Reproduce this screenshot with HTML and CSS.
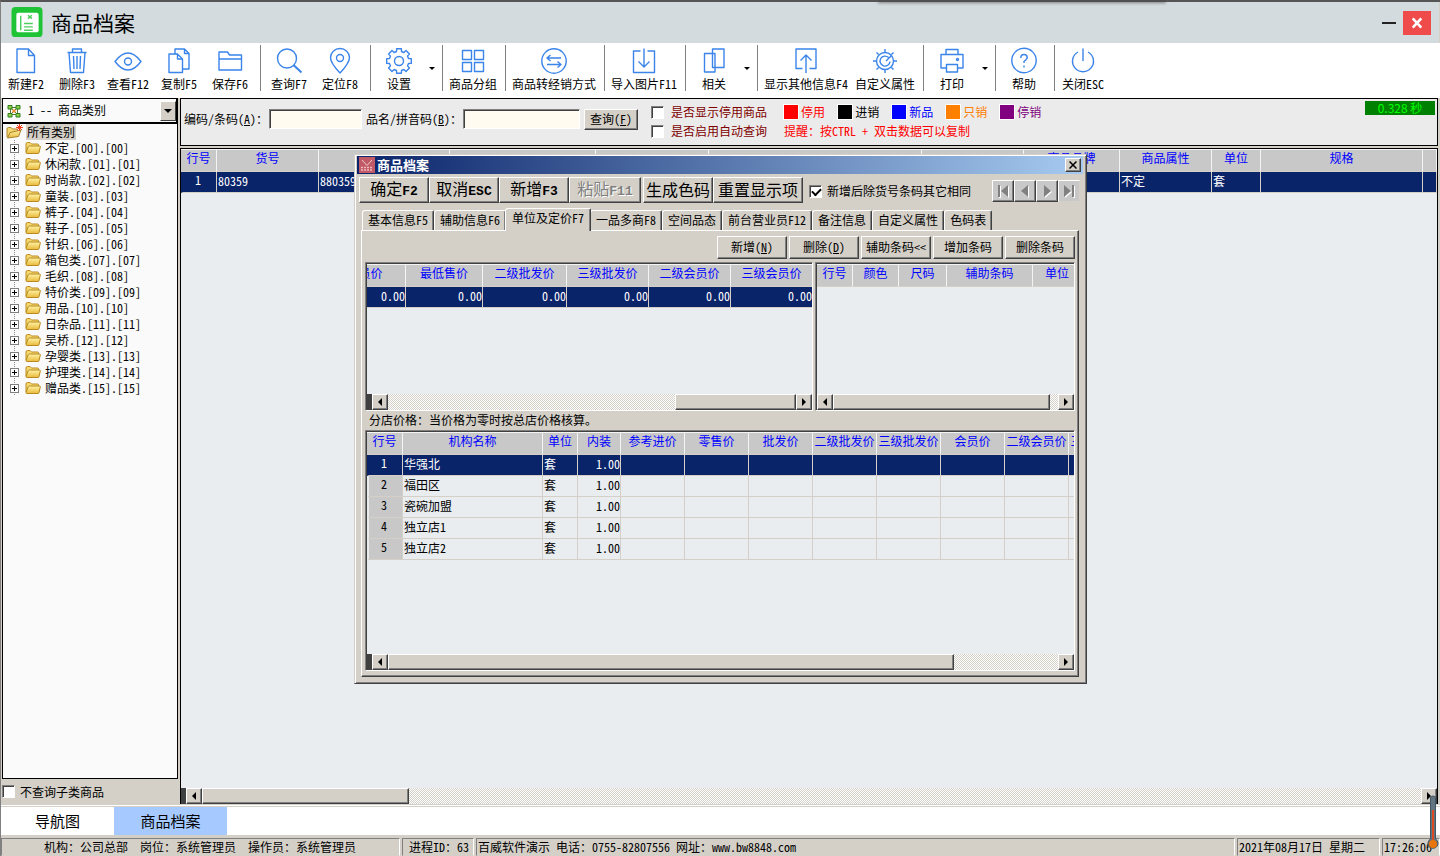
FILE: index.html
```html
<!DOCTYPE html>
<html lang="zh-CN">
<head>
<meta charset="utf-8">
<title>商品档案</title>
<link rel="stylesheet" href="styles.css">
</head>
<body>
<svg class="defs" aria-hidden="true">
  <defs>
    <linearGradient id="gold" x1="0" y1="0" x2="0" y2="1"><stop offset="0" stop-color="#fff3a6"/><stop offset="1" stop-color="#e9b93c"/></linearGradient>
    <symbol id="folder" viewBox="0 0 16 14">
      <path d="M1 11V3Q1 1.500 2.500 1.500H5L6.500 3H12.500Q13.500 3 13.500 4V5" fill="#f6d873" stroke="#b98a1c"/>
      <path d="M1 11.500 3.300 5.500Q3.600 5 4.200 5H14.500Q15.500 5 15.300 6L14 11.700Q13.800 12.500 13 12.500H2Q1 12.500 1 11.500Z" fill="url(#gold)" stroke="#b98a1c"/>
    </symbol>
  </defs>
</svg>

<div class="window">
  <header class="titlebar">
    <svg class="logo" viewBox="0 0 32 32"><rect width="32" height="31" rx="4" fill="#1fc436"/><path d="M5 8Q5 6 7 6H26Q28 6 28 8V24Q28 26 26 26H7Q5 26 5 24Z" fill="#fff"/><path d="M9.500 9V24M13 17H22M13 20.500H22M13 24H22M17 8.500 21 12M21 8.500 17 12" stroke="#4ccf5c" stroke-width="1.500" fill="none"/></svg>
    <h1>商品档案</h1>
    <div class="notch"></div>
    <button class="min" type="button" aria-label="最小化"></button>
    <button class="close" type="button" aria-label="关闭"><svg viewBox="0 0 14 14"><path d="M2 1.500 12 12.500M12 1.500 2 12.500" stroke="#fff" stroke-width="3"/></svg></button>
  </header>

  <nav class="toolbar">
    <button type="button"><svg viewBox="0 0 28 28"><path d="M5 2H16.500L22.500 8.500V25.500H5ZM16.500 2V8.500H22.500"/></svg>新建F2</button>
    <button type="button"><svg viewBox="0 0 28 28"><path d="M4.500 5.500H23.500M9.500 5V2H18.500V5M6 5.500 7.500 25.500H20.500L22 5.500M10.500 9 11 22M14 9V22M17.500 9 17 22"/></svg>删除F3</button>
    <button type="button"><svg viewBox="0 0 28 28"><path d="M1 14.500Q14-2.500 27 14.500Q14 31.500 1 14.500Z"/><circle cx="14" cy="14.500" r="3.500"/></svg>查看F12</button>
    <button type="button"><svg viewBox="0 0 28 28"><path d="M10 6.500V2H19.500L24 6.500V22H17.500M19.500 2V6.500H24M4 7H12.500L17.500 12V25.500H4ZM12.500 7V12H17.500"/></svg>复制F5</button>
    <button type="button"><svg viewBox="0 0 28 28"><path d="M3 23V5H11.500L13.500 8H25.500V23ZM3 12H25.500"/></svg>保存F6</button>
    <i class="sep"></i>
    <button type="button"><svg viewBox="0 0 28 28"><circle cx="12" cy="11.500" r="9.500"/><path d="M18.500 18 26.500 25.500" stroke-width="2"/></svg>查询F7</button>
    <button type="button"><svg viewBox="0 0 28 28"><path d="M14 26Q4.500 16 4.500 10.500A9.500 9 0 0 1 23.500 10.500Q23.500 16 14 26Z"/><circle cx="14" cy="11" r="3.500"/></svg>定位F8</button>
    <i class="sep"></i>
    <button type="button"><svg viewBox="-14 -14 28 28"><path d="M9.500-2.500 12.300-2.400V2.400L9.500 2.500 8.500 4.900 10.400 7 7 10.400 4.900 8.500 2.500 9.500 2.400 12.300H-2.400L-2.500 9.500-4.900 8.500-7 10.400-10.400 7-8.500 4.900-9.500 2.500-12.300 2.400V-2.400L-9.500-2.500-8.500-4.900-10.400-7-7-10.400-4.900-8.500-2.500-9.500-2.400-12.300H2.400L2.500-9.500 4.900-8.500 7-10.400 10.400-7 8.500-4.900Z"/><circle r="4.500"/></svg>设置</button>
    <button class="more" type="button" aria-label="设置菜单"></button>
    <i class="sep"></i>
    <button type="button"><svg viewBox="0 0 28 28"><path d="M3.500 3.500H12.500V12.500H3.500ZM15.500 3.500H24.500V12.500H15.500ZM3.500 15.500H12.500V24.500H3.500ZM15.500 15.500H24.500V24.500H15.500Z"/></svg>商品分组</button>
    <i class="sep"></i>
    <button type="button"><svg viewBox="0 0 28 28"><circle cx="14" cy="14" r="12.200"/><path d="M21 11H7.500M10.500 8 7 11 10.500 14M7 17.500H20.500M17.500 14.500 21 17.500 17.500 20.500"/></svg>商品转经销方式</button>
    <i class="sep"></i>
    <button type="button"><svg viewBox="0 0 28 28"><path d="M10.500 4H3.500V25.500H24.500V4H17.500M14 1.500V20M8.500 14.500 14 20 19.500 14.500"/></svg>导入图片F11</button>
    <i class="sep"></i>
    <button type="button"><svg viewBox="0 0 28 28"><path d="M4.500 6.500H15V25H4.500ZM12.500 2H24V20.500H12.500Z"/></svg>相关</button>
    <button class="more" type="button" aria-label="相关菜单"></button>
    <i class="sep"></i>
    <button type="button"><svg viewBox="0 0 28 28"><path d="M10.500 21.500H4V2H24V21.500H17.500M14 26V8M8.500 13.500 14 8 19.500 13.500"/></svg>显示其他信息F4</button>
    <button type="button"><svg viewBox="-14 -14 28 28"><circle r="8.500"/><path d="M3.500-3.500A5 5 0 1 0 5 .500M1 0 6.500-5.500M0-9V-12M0 9V12M-9 0H-12M9 0H12M6.400-6.400 8.500-8.500M-6.400-6.400-8.500-8.500M6.400 6.400 8.500 8.500M-6.400 6.400-8.500 8.500"/></svg>自定义属性</button>
    <i class="sep"></i>
    <button type="button"><svg viewBox="0 0 28 28"><path d="M8 7.500V2.500H20V7.500M8 21H3V7.500H25V21H20M8.500 17.500H19.500V25H8.500Z"/><circle cx="19.500" cy="12.500" r="1"/></svg>打印</button>
    <button class="more" type="button" aria-label="打印菜单"></button>
    <i class="sep"></i>
    <button type="button"><svg viewBox="0 0 28 28"><circle cx="14" cy="13.500" r="12.200"/><path d="M10.800 11Q10.800 7.500 14 7.500T17.200 10.500Q17.200 12 14 14.500V16M14 18.500V20.500"/></svg>帮助</button>
    <i class="sep"></i>
    <button type="button"><svg viewBox="0 0 28 28"><path d="M14 1.500V14M9 5A10.500 10.500 0 1 0 19 5"/></svg>关闭ESC</button>
  </nav>

  <main class="work">
    <aside class="side">
      <div class="combo">
        <svg viewBox="0 0 14 14"><path d="M5 3.500H9M5 10.500H9M3.500 5V9M10.500 5V9M4 4 10 10M10 4 4 10" stroke="#557a33"/><path d="M1 1.500H5V5H1ZM9 1.500H13V5H9ZM1 9.500H5V13H1ZM9 9.500H13V13H9Z" fill="#8ed04c" stroke="#2f7d1c"/><rect x="5.500" y="5.500" width="3" height="3" fill="#f08a24"/></svg>
        <select aria-label="类别方式"><option>1 -- 商品类别</option></select>
        <i class="drop"></i>
      </div>
      <div class="tree">
        <div class="root"><svg viewBox="0 0 18 16"><path d="M1 13V5Q1 3.500 2.500 3.500H5L6.500 5H11.500V7" fill="#f6d873" stroke="#a9822a"/><path d="M1.500 14 4 8.500 15 6 12.500 12.500Z" fill="url(#gold)" stroke="#a9822a"/><path d="M13.500 0V7M10 3.500H17M11 1 16 6M16 1 11 6" stroke="#f04020"/></svg><span>所有类别</span></div>
        <ul>
          <li><i></i><svg><use href="#folder"/></svg>不定.[00].[00]</li>
          <li><i></i><svg><use href="#folder"/></svg>休闲款.[01].[01]</li>
          <li><i></i><svg><use href="#folder"/></svg>时尚款.[02].[02]</li>
          <li><i></i><svg><use href="#folder"/></svg>童装.[03].[03]</li>
          <li><i></i><svg><use href="#folder"/></svg>裤子.[04].[04]</li>
          <li><i></i><svg><use href="#folder"/></svg>鞋子.[05].[05]</li>
          <li><i></i><svg><use href="#folder"/></svg>针织.[06].[06]</li>
          <li><i></i><svg><use href="#folder"/></svg>箱包类.[07].[07]</li>
          <li><i></i><svg><use href="#folder"/></svg>毛织.[08].[08]</li>
          <li><i></i><svg><use href="#folder"/></svg>特价类.[09].[09]</li>
          <li><i></i><svg><use href="#folder"/></svg>用品.[10].[10]</li>
          <li><i></i><svg><use href="#folder"/></svg>日杂品.[11].[11]</li>
          <li><i></i><svg><use href="#folder"/></svg>吴桥.[12].[12]</li>
          <li><i></i><svg><use href="#folder"/></svg>孕婴类.[13].[13]</li>
          <li><i></i><svg><use href="#folder"/></svg>护理类.[14].[14]</li>
          <li><i></i><svg><use href="#folder"/></svg>赠品类.[15].[15]</li>
        </ul>
      </div>
      <label class="check subcheck"><input type="checkbox">不查询子类商品</label>
    </aside>

    <section class="content">
      <form class="filter">
        <label for="code">编码/条码(<u>A</u>)：</label>
        <input id="code" class="code" type="text">
        <label for="name">品名/拼音码(<u>B</u>)：</label>
        <input id="name" class="name" type="text">
        <button class="btn query" type="button">查询(<u>F</u>)</button>
        <div class="checks">
          <label class="check"><input type="checkbox">是否显示停用商品</label>
          <label class="check"><input type="checkbox">是否启用自动查询</label>
        </div>
        <div class="notes">
          <ul class="legend">
            <li class="red"><i></i>停用</li><li class="black"><i></i>进销</li><li class="blue"><i></i>新品</li><li class="orange"><i></i>只销</li><li class="purple"><i></i>停销</li>
          </ul>
          <p>提醒：按CTRL + 双击数据可以复制</p>
        </div>
        <output class="timer">0.328 秒</output>
      </form>

      <div class="grid main-grid">
        <div class="pane">
          <table>
            <colgroup><col class="c36"><col class="c102"><col class="c131"><col class="c146"><col class="c113"><col class="c213"><col class="c102"><col class="c96"><col class="c92"><col class="c49"><col class="c162"><col></colgroup>
            <thead><tr><th>行号</th><th>货号</th><th></th><th></th><th></th><th></th><th></th><th>商品品牌</th><th>商品属性</th><th>单位</th><th>规格</th><th></th></tr></thead>
            <tbody><tr class="on"><td class="no">1</td><td>80359</td><td>880359</td><td></td><td></td><td></td><td></td><td></td><td>不定</td><td>套</td><td></td><td></td></tr></tbody>
          </table>
        </div>
        <div class="scroll"><i class="dark"></i><button class="left" type="button" aria-label="向左"></button><i class="thumb t207"></i><i class="fill"></i><button class="right" type="button" aria-label="向右"></button></div>
      </div>
    </section>
  </main>

  <nav class="pages"><a href="#">导航图</a><a href="#" class="on">商品档案</a></nav>

  <footer class="status">
    <span class="org">机构：公司总部  岗位：系统管理员  操作员：系统管理员</span>
    <span class="pid">进程ID：63</span>
    <span class="firm">百威软件演示 电话：0755-82807556 网址：www.bw8848.com</span>
    <span class="date">2021年08月17日 星期二</span>
    <span class="time">17:26:06</span>
    <svg class="thermo" viewBox="0 0 14 56"><path d="M4.500 3Q4.500 1 7 1T9.500 3V44A5 5 0 1 1 4.500 44Z" fill="#62747f" stroke="#405565"/><path d="M7 15V48" stroke="#dd4a22" stroke-width="2"/><circle cx="7" cy="49" r="4" fill="#e8760c"/></svg>
  </footer>
</div>

<div class="dialog" role="dialog" aria-labelledby="dlg-title">
  <div class="dlg-title">
    <svg viewBox="0 0 16 16"><rect width="16" height="16" fill="#c05a66"/><path d="M3 3 8 8.500 13 3" fill="none" stroke="#f3c9c9"/><path d="M2 10.500H14M2 13H14" stroke="#efb9bd" stroke-width="1.500" stroke-dasharray="2 1"/></svg>
    <h2 id="dlg-title">商品档案</h2>
    <button class="btn" type="button" aria-label="关闭"><svg viewBox="0 0 8 8"><path d="M.500.500 7.500 7.500M7.500.500.500 7.500" stroke="#000" stroke-width="1.500"/></svg></button>
  </div>
  <div class="dlg-tools">
    <button class="btn w70" type="button">确定<b>F2</b></button><button class="btn w70" type="button">取消<b>ESC</b></button><button class="btn w70" type="button">新增<b>F3</b></button><button class="btn w72" type="button" disabled>粘贴<b>F11</b></button><button class="btn gap w70" type="button">生成色码</button><button class="btn w90" type="button">重置显示项</button>
    <label class="check"><input type="checkbox" checked>新增后除货号条码其它相同</label>
    <div class="pager">
      <button class="btn" type="button" disabled aria-label="首条"><svg viewBox="0 0 18 18"><path d="M4 3H6V15H4ZM14 3V15L7 9Z"/></svg></button>
      <button class="btn" type="button" disabled aria-label="上一条"><svg viewBox="0 0 18 18"><path d="M12 3V15L5 9Z"/></svg></button>
      <button class="btn" type="button" disabled aria-label="下一条"><svg viewBox="0 0 18 18"><path d="M6 3V15L13 9Z"/></svg></button>
      <button class="btn" type="button" disabled aria-label="末条"><svg viewBox="0 0 18 18"><path d="M4 3V15L11 9ZM12 3H14V15H12Z"/></svg></button>
    </div>
  </div>
  <div class="tabs">
    <button type="button">基本信息F5</button><button type="button">辅助信息F6</button><button type="button" class="on">单位及定价F7</button><button type="button">一品多商F8</button><button type="button">空间品态</button><button type="button">前台营业员F12</button><button type="button">备注信息</button><button type="button">自定义属性</button><button type="button">色码表</button>
  </div>
  <div class="panel">
    <div class="actions">
      <button class="btn" type="button">新增(<u>N</u>)</button><button class="btn" type="button">删除(<u>D</u>)</button><button class="btn" type="button">辅助条码&lt;&lt;</button><button class="btn" type="button">增加条码</button><button class="btn" type="button">删除条码</button>
    </div>
    <div class="pair">
      <div class="grid sunk prices">
        <div class="pane">
          <table class="scrolled">
            <colgroup><col class="c82"><col class="c77"><col class="c84"><col class="c82"><col class="c82"><col class="c82"></colgroup>
            <thead><tr><th>会员价</th><th>最低售价</th><th>二级批发价</th><th>三级批发价</th><th>二级会员价</th><th>三级会员价</th></tr></thead>
            <tbody><tr class="on num"><td>0.00</td><td>0.00</td><td>0.00</td><td>0.00</td><td>0.00</td><td>0.00</td></tr></tbody>
          </table>
        </div>
        <div class="scroll"><i class="dark"></i><button class="left" type="button" aria-label="向左"></button><i class="fill"></i><i class="thumb t121"></i><button class="right" type="button" aria-label="向右"></button></div>
      </div>
      <div class="grid sunk codes">
        <div class="pane">
          <table>
            <colgroup><col class="c36"><col class="c46"><col class="c48"><col class="c86"><col class="c49"></colgroup>
            <thead><tr><th>行号</th><th>颜色</th><th>尺码</th><th>辅助条码</th><th>单位</th></tr></thead>
          </table>
        </div>
        <div class="scroll"><button class="left" type="button" aria-label="向左"></button><i class="thumb t217"></i><i class="fill"></i><button class="right" type="button" aria-label="向右"></button></div>
      </div>
    </div>
    <p class="hint">分店价格：当价格为零时按总店价格核算。</p>
    <div class="grid sunk shops">
      <div class="pane">
        <table>
          <colgroup><col class="c36"><col class="c140"><col class="c35"><col class="c43"><col class="c64"><col class="c64"><col class="c64"><col class="c64"><col class="c64"><col class="c64"><col class="c64"><col class="c64"></colgroup>
          <thead><tr><th>行号</th><th>机构名称</th><th>单位</th><th>内装</th><th>参考进价</th><th>零售价</th><th>批发价</th><th>二级批发价</th><th>三级批发价</th><th>会员价</th><th>二级会员价</th><th>三级会员价</th></tr></thead>
          <tbody>
            <tr class="on"><td class="no">1</td><td>华强北</td><td>套</td><td class="r">1.00</td><td></td><td></td><td></td><td></td><td></td><td></td><td></td><td></td></tr>
            <tr><td class="no">2</td><td>福田区</td><td>套</td><td class="r">1.00</td><td></td><td></td><td></td><td></td><td></td><td></td><td></td><td></td></tr>
            <tr><td class="no">3</td><td>瓷碗加盟</td><td>套</td><td class="r">1.00</td><td></td><td></td><td></td><td></td><td></td><td></td><td></td><td></td></tr>
            <tr><td class="no">4</td><td>独立店1</td><td>套</td><td class="r">1.00</td><td></td><td></td><td></td><td></td><td></td><td></td><td></td><td></td></tr>
            <tr><td class="no">5</td><td>独立店2</td><td>套</td><td class="r">1.00</td><td></td><td></td><td></td><td></td><td></td><td></td><td></td><td></td></tr>
          </tbody>
        </table>
      </div>
      <div class="scroll"><i class="dark"></i><button class="left" type="button" aria-label="向左"></button><i class="thumb t566"></i><i class="fill"></i><button class="right" type="button" aria-label="向右"></button></div>
    </div>
  </div>
</div>
</body>
</html>
```

FILE: styles.css
```css
:root {
  --face: #d4d0c8;
  --grid: #e9edf0;
  --head: #c8c8c8;
  --navy: #0a246a;
  --dark: #404040;
  --mid: #808080;
}

* { box-sizing: border-box; }

body, button, input, select, output {
  font-family: "Noto Sans CJK SC", "Liberation Sans", sans-serif;
  font-size: 12px;
  line-height: 16px;
  font-feature-settings: "hwid";
  color: #000;
}

body { margin: 0; background: var(--face); white-space: nowrap; overflow: hidden; }
h1, h2, p, ul { margin: 0; padding: 0; font-weight: normal; }
li { list-style: none; }
button { margin: 0; padding: 0; border: 0; background: none; }
svg { display: block; fill: none; flex: none; }
.defs { position: absolute; width: 0; height: 0; }

.window { display: flex; flex-direction: column; min-height: 100vh; border-top: 2px solid #555; border-left: 1px solid var(--mid); }

/* title bar */
.titlebar { display: flex; align-items: center; height: 41px; background: #d4dbdf; padding: 0 8px 0 10px; border-right: 1px solid var(--face); position: relative; }
.logo { width: 32px; height: 31px; }
h1 { font-size: 21px; line-height: 28px; margin: 0 0 2px 8px; flex: 1; }
.notch { position: absolute; top: -2px; left: 61%; width: 20%; height: 2px; background: #505050; box-shadow: 0 1px 3px #707070; }
.min { width: 14px; height: 2px; background: #222; margin-right: 7px; }
.close { width: 28px; height: 24px; background: #f04b4b; display: flex; align-items: center; justify-content: center; }
.close svg { width: 14px; height: 12px; }

/* toolbar */
.toolbar { display: flex; height: 55px; padding-top: 2px; background: #fff; }
.toolbar button { min-width: 51px; padding: 2px 4px 0 3px; display: flex; flex-direction: column; align-items: center; height: 50px; }
.toolbar svg { width: 28px; height: 28px; margin-bottom: 1px; stroke: #3b84ea; stroke-width: 1.4; stroke-linejoin: round; }
.toolbar .sep { width: 1px; height: 46px; margin: 0 3px 0 4px; background: var(--mid); }
.toolbar .more { min-width: 13px; padding: 22px 0 0; }
.more::before { content: ""; border: 3px solid transparent; border-top-color: #000; border-bottom: 0; }

/* work area */
.work { flex: 1; display: flex; min-height: 0; }
.side { width: 178px; display: flex; flex-direction: column; margin-left: 1px; border-right: 1px solid var(--face); }
.combo { display: flex; align-items: center; height: 25px; border: 1px solid #000; border-right-width: 2px; background: #fafafa; margin-right: 1px; padding-left: 4px; }
.combo svg { width: 14px; height: 14px; }
.combo select { appearance: none; flex: 1; border: 0; background: none; padding: 0 0 2px 7px; }
.drop { width: 16px; height: 20px; background: var(--face); border: 1px solid; border-color: #fff var(--dark) var(--dark) #fff; display: flex; align-items: center; justify-content: center; pointer-events: none; }
.drop::before { content: ""; border: 4px solid transparent; border-top-color: #000; border-bottom: 0; }
.tree { flex: 1; border: 1px solid #000; background: #fafafa; margin-right: 1px; }
.root { display: flex; align-items: center; height: 16px; padding-left: 3px; gap: 2px; }
.root svg { width: 18px; height: 16px; }
.root span { background: var(--face); padding: 0 1px; }
.tree li { display: flex; align-items: center; height: 16px; padding-left: 7px; background: repeating-linear-gradient(#888 0 1px, transparent 1px 2px) 11px 0 / 1px 16px no-repeat; }
.tree li i { width: 9px; height: 9px; border: 1px solid var(--mid); background: linear-gradient(#000, #000) center / 5px 1px no-repeat, linear-gradient(#000, #000) center / 1px 5px no-repeat, #fff; }
.tree li i + svg { width: 16px; height: 14px; margin: 0 4px 0 6px; }
.check { display: flex; align-items: center; }
.check input { appearance: none; flex: none; width: 13px; height: 13px; margin: 0; background: #fff; border: 1px solid; border-color: var(--mid) #fff #fff var(--mid); box-shadow: inset 1px 1px var(--dark); }
.check input:checked::before { content: ""; display: block; width: 7px; height: 4px; margin: 2px 0 0 2px; border: 2px solid #000; border-width: 0 0 2px 2px; rotate: -45deg; }
.subcheck { height: 25px; gap: 5px; }

.content { flex: 1; min-width: 0; display: flex; flex-direction: column; gap: 2px; margin-right: 2px; }
.filter { display: flex; align-items: center; height: 48px; background: #ebebeb; border: 1px solid #000; padding: 0 0 6px 3px; }
.filter > input { height: 20px; background: #fffbf0; border: 1px solid; border-color: var(--mid) #fff #fff var(--mid); box-shadow: inset 1px 1px var(--dark); padding: 0 3px; margin-right: 4px; }
.filter > .code { width: 93px; margin-left: 1px; }
.filter > .name { width: 117px; margin: 0 3px 0 1px; }
.btn { background: var(--face); border: 1px solid; border-color: #fff var(--dark) var(--dark) #fff; box-shadow: inset -1px -1px var(--mid); text-align: center; }
.query { width: 54px; height: 21px; margin: 0 13px 0 1px; }
.checks, .notes { display: grid; gap: 3px; margin-top: 5px; }
.checks { color: #800000; }
.checks .check { gap: 7px; }
.notes { margin-left: 17px; color: #f00; }
.legend { display: flex; gap: 13px; }
.legend li { display: flex; align-items: center; gap: 3px; }
.legend i { width: 14px; height: 14px; background: currentColor; outline: 1px solid #fff; }
.legend .black { color: #000; }
.legend .blue { color: #00f; }
.legend .orange { color: #ff8000; }
.legend .purple { color: #800080; }
.timer { margin: 2px 2px 0 auto; align-self: flex-start; width: 70px; height: 14px; line-height: 14px; background: #008000; color: #0f0; text-align: center; font-feature-settings: normal; }

/* grids */
.grid { display: flex; flex-direction: column; background: var(--grid); overflow: hidden; min-width: 0; }
.main-grid { flex: 1; border: 1px solid #000; border-bottom: 0; }
.pane { flex: 1; overflow: hidden; min-height: 0; }
table { border-collapse: separate; border-spacing: 0; table-layout: fixed; width: 100%; }
th { height: 23px; padding: 0 0 5px; background: var(--head); color: #00f; font-weight: normal; border-right: 1px solid #f4f4f4; border-bottom: 1px solid var(--face); border-top: 1px solid #f4f4f4; line-height: 16px; text-align: center; overflow: hidden; }
td { height: 21px; padding: 0 0 2px 1px; border-right: 1px solid var(--face); border-bottom: 1px solid var(--face); line-height: 16px; overflow: hidden; }
.num td, td.r { text-align: right; }
td.no { background: var(--head); text-align: center; padding: 0 3px 4px 0; border-left: 2px solid var(--grid); }
.on td { background: var(--navy); color: #fff; }
.on td.no { background: var(--navy); border-left-color: var(--navy); }
.c35 { width: 35px; } .c36 { width: 36px; } .c43 { width: 43px; } .c46 { width: 46px; } .c48 { width: 48px; } .c49 { width: 49px; }
.c64 { width: 64px; } .c77 { width: 77px; } .c82 { width: 82px; } .c84 { width: 84px; } .c86 { width: 86px; } .c92 { width: 92px; } .c96 { width: 96px; }
.c102 { width: 102px; } .c113 { width: 113px; } .c131 { width: 131px; } .c140 { width: 140px; } .c146 { width: 146px; } .c162 { width: 162px; } .c213 { width: 213px; }

.scroll { display: flex; height: 16px; }
.scroll .dark { width: 5px; background: var(--dark); }
.scroll button, .thumb { background: var(--face); border: 1px solid; border-color: #fff var(--dark) var(--dark) #fff; box-shadow: inset -1px -1px var(--mid); }
.scroll button { width: 16px; display: flex; align-items: center; justify-content: center; }
.scroll button::before { content: ""; border: 4px solid transparent; }
.scroll .left::before { border-left: 0; border-right-color: #000; }
.scroll .right::before { border-right: 0; border-left-color: #000; }
.fill { flex: 1; background: repeating-conic-gradient(#fff 0 25%, var(--face) 0 50%) 0 0 / 2px 2px; }
.t121 { width: 121px; } .t207 { width: 207px; } .t217 { width: 217px; } .t566 { width: 566px; }

/* page tabs and status bar */
.pages { display: flex; height: 32px; padding-top: 3px; background: linear-gradient(var(--face) 1px, #fff 1px 2px, var(--face) 2px 3px, #fff 3px); border-bottom: 1px solid var(--face); }
.pages a { width: 113px; font-size: 15px; line-height: 28px; text-align: center; color: #000; text-decoration: none; }
.pages .on { background: #a6caff; }
.status { display: flex; gap: 2px; height: 18px; margin-top: 2px; position: relative; white-space: pre; }
.status span { border: 1px solid; border-color: var(--mid) #fff var(--face) var(--mid); padding-left: 1px; height: 18px; }
.status .org { width: 399px; padding-left: 42px; }
.status .pid { width: 72px; padding-left: 6px; }
.status .firm { flex: 1; }
.status .date { width: 143px; }
.status .time { width: 58px; }
.thermo { position: absolute; right: 0; bottom: 5px; width: 14px; height: 56px; }

/* dialog */
.dialog { position: absolute; left: 354px; top: 154px; width: 733px; background: var(--face); border: 1px solid; border-color: var(--face) var(--dark) var(--dark) var(--face); box-shadow: inset 1px 1px #fff, inset -1px -1px var(--mid); padding: 1px 2px 6px; }
.dlg-title { display: flex; align-items: center; height: 18px; margin-right: 1px; padding: 0 2px; background: linear-gradient(90deg, #0a246a, #a6caf0); }
.dlg-title > svg { width: 16px; height: 16px; }
h2 { flex: 1; margin-left: 2px; font-size: 13px; line-height: 18px; font-weight: bold; color: #fff; }
.dlg-title .btn { width: 16px; height: 14px; display: flex; align-items: center; justify-content: center; }
.dlg-title .btn svg { width: 8px; height: 8px; }
.dlg-tools { display: flex; align-items: center; height: 29px; padding: 3px 4px 0 2px; }
.dlg-tools > .btn { height: 26px; font-size: 16px; line-height: 20px; padding-bottom: 3px; }
.dlg-tools b { font-family: "Liberation Mono", monospace; font-size: 13px; }
.dlg-tools > .gap { margin-left: 2px; }
.w70 { width: 70px; } .w72 { width: 72px; } .w90 { width: 90px; }
.btn:disabled { color: var(--mid); text-shadow: 1px 1px #fff; }
.dlg-tools .check { flex: 1; margin-left: 6px; gap: 5px; padding-top: 2px; }
.pager { display: flex; padding-top: 2px; }
.pager .btn { width: 22px; height: 22px; background: var(--head); }
.pager .btn svg { width: 18px; height: 18px; margin: auto; fill: var(--mid); filter: drop-shadow(1px 1px #fff); }
.pager .btn:last-child { border-color: #fff var(--face) var(--face) #fff; box-shadow: none; }

.tabs { display: flex; align-items: flex-end; height: 27px; margin-left: 5px; }
.tabs button { height: 20px; padding: 0 5px 1px; border: 1px solid; border-color: #fff var(--dark) transparent #fff; border-bottom: 0; border-radius: 3px 2px 0 0; box-shadow: inset -1px 0 var(--mid); }
.tabs .on { height: 23px; padding: 0 6px 5px; margin: 0 -1px -1px; background: var(--face); position: relative; }
.panel { margin: 0 5px 0 4px; border: 1px solid; border-color: #fff var(--dark) var(--dark) #fff; box-shadow: inset -1px -1px var(--mid); padding: 5px 3px; }
.actions { display: flex; justify-content: flex-end; gap: 2px; }
.actions .btn { width: 70px; height: 23px; padding-bottom: 2px; }
.sunk { border: 1px solid; border-color: var(--mid) #fff #fff var(--mid); }
.sunk > .pane { border: 1px solid var(--dark); border-width: 1px 0 0 1px; }
.sunk > .scroll { border-left: 1px solid var(--dark); }
.pair { display: flex; gap: 2px; margin-top: 3px; height: 149px; }
.prices { width: 448px; }
.codes { flex: 1; }
.codes table { width: 265px; }
.scrolled { width: 489px; margin-left: -43px; }
.hint { height: 19px; padding: 1px 0 2px 4px; }
.shops { height: 241px; }
.shops table { width: 766px; }
```
